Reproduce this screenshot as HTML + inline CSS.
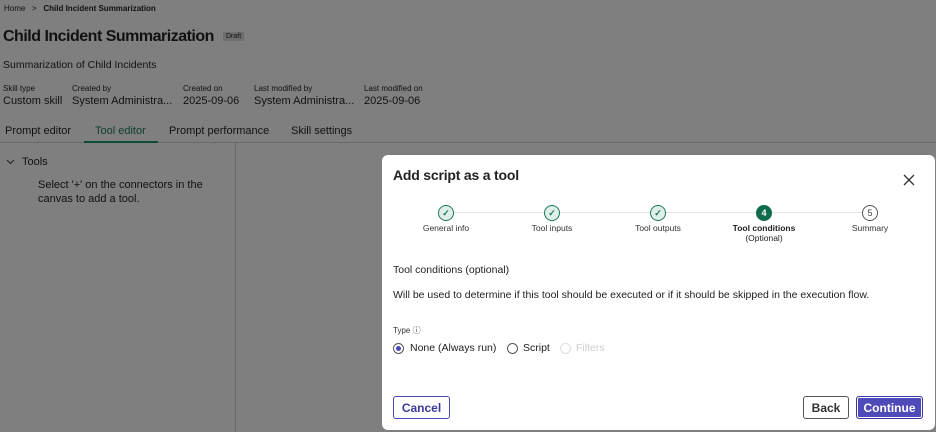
<!DOCTYPE html>
<html><head><meta charset="utf-8"><style>
*{margin:0;padding:0;box-sizing:border-box}
body{width:936px;height:432px;overflow:hidden;background:#7f7f7f;font-family:"Liberation Sans",sans-serif;color:#111;position:relative}
.a{position:absolute;white-space:nowrap}
.m{position:absolute;left:382px;top:155px;width:553px;height:275px;background:#fff;border-radius:6px}
.c{position:absolute;width:16px;height:16px;border-radius:50%;top:50px;border:1.5px solid #1d7a5a;background:#dfeee8;display:flex;align-items:center;justify-content:center;font-size:9px;font-weight:bold}
.lb{position:absolute;top:68px;font-size:8.5px;color:#333;text-align:center;width:100px}
.btn{position:absolute;top:241px;height:23px;border:1px solid #555;border-radius:3px;font-size:12px;font-weight:bold;display:flex;align-items:center;justify-content:center}
</style></head><body>
<div class="a" style="left:4px;top:4px;font-size:8px">Home &nbsp;&nbsp;&gt;&nbsp;&nbsp; <b>Child Incident Summarization</b></div>
<div class="a" style="left:3px;top:28px;font-size:16px;font-weight:bold;letter-spacing:-0.5px">Child Incident Summarization</div>
<div class="a" style="left:223px;top:32px;font-size:7px;background:#6e6e6e;padding:1px 3px">Draft</div>
<div class="a" style="left:3px;top:59px;font-size:10.5px">Summarization of Child Incidents</div>
<div class="a" style="left:3px;top:84px;font-size:8px">Skill type</div>
<div class="a" style="left:72px;top:84px;font-size:8px">Created by</div>
<div class="a" style="left:183px;top:84px;font-size:8px">Created on</div>
<div class="a" style="left:254px;top:84px;font-size:8px">Last modified by</div>
<div class="a" style="left:364px;top:84px;font-size:8px">Last modified on</div>
<div class="a" style="left:3px;top:95px;font-size:11px">Custom skill</div>
<div class="a" style="left:72px;top:95px;font-size:11px">System Administra...</div>
<div class="a" style="left:183px;top:95px;font-size:11px">2025-09-06</div>
<div class="a" style="left:254px;top:95px;font-size:11px">System Administra...</div>
<div class="a" style="left:364px;top:95px;font-size:11px">2025-09-06</div>
<div class="a" style="left:5px;top:125px;font-size:11px">Prompt editor</div>
<div class="a" style="left:95px;top:125px;font-size:11px;color:#0f3d2c">Tool editor</div>
<div class="a" style="left:169px;top:125px;font-size:11px">Prompt performance</div>
<div class="a" style="left:291px;top:125px;font-size:11px">Skill settings</div>
<div class="a" style="left:0;top:142px;width:936px;height:1px;background:#6a6a6a"></div>
<div class="a" style="left:84px;top:141px;width:74px;height:2px;background:#0f4a33"></div>
<div class="a" style="left:235px;top:143px;width:1px;height:289px;background:#6a6a6a"></div>
<svg class="a" style="left:6px;top:159px" width="9" height="6"><path d="M1 1L4.5 4.5L8 1" fill="none" stroke="#222" stroke-width="1"/></svg>
<div class="a" style="left:22px;top:156px;font-size:11px">Tools</div>
<div class="a" style="left:38px;top:178px;font-size:11px;line-height:14px">Select '+' on the connectors in the<br>canvas to add a tool.</div>
<div class="m">
<div class="a" style="left:11px;top:12px;font-size:14px;font-weight:bold;color:#222;letter-spacing:-0.2px">Add script as a tool</div>
<svg class="a" style="left:521px;top:19px" width="12" height="12"><path d="M1 1L11 11M11 1L1 11" stroke="#333" stroke-width="1.3"/></svg>
<div class="a" style="left:64px;top:57px;width:424px;height:1px;background:#e3e3e3"></div>
<div class="c" style="left:56px;color:#1d7a5a">&#10003;</div>
<div class="c" style="left:162px;color:#1d7a5a">&#10003;</div>
<div class="c" style="left:268px;color:#1d7a5a">&#10003;</div>
<div class="c" style="left:374px;background:#0e6b4b;color:#fff;border-color:#0e6b4b">4</div>
<div class="c" style="left:480px;background:#fff;border-color:#555;color:#444;font-weight:normal">5</div>
<div class="lb" style="left:14px">General info</div>
<div class="lb" style="left:120px">Tool inputs</div>
<div class="lb" style="left:226px">Tool outputs</div>
<div class="lb" style="left:332px;font-weight:bold;color:#222">Tool conditions<br><span style="font-weight:normal">(Optional)</span></div>
<div class="lb" style="left:438px">Summary</div>
<div class="a" style="left:11px;top:109px;font-size:10.5px;color:#222">Tool conditions (optional)</div>
<div class="a" style="left:11px;top:134px;font-size:10.5px;color:#222">Will be used to determine if this tool should be executed or if it should be skipped in the execution flow.</div>
<div class="a" style="left:11px;top:170px;font-size:8px;color:#333">Type &#9432;</div>
<div class="a" style="left:11px;top:188px;width:11px;height:11px;border:1px solid #555;border-radius:50%"><div style="margin:2px;width:5px;height:5px;border-radius:50%;background:#4a47b8"></div></div>
<div class="a" style="left:28px;top:187px;font-size:10.5px;color:#222">None (Always run)</div>
<div class="a" style="left:125px;top:188px;width:11px;height:11px;border:1px solid #555;border-radius:50%"></div>
<div class="a" style="left:141px;top:187px;font-size:10.5px;color:#222">Script</div>
<div class="a" style="left:178px;top:188px;width:11px;height:11px;border:1px solid #ddd;border-radius:50%"></div>
<div class="a" style="left:194px;top:187px;font-size:10.5px;color:#ccc">Filters</div>
<div class="btn" style="left:11px;width:57px;border-color:#4a47b8;color:#3b3a9e">Cancel</div>
<div class="btn" style="left:421px;width:46px;color:#333">Back</div>
<div class="btn" style="left:474px;width:67px;background:#4e4bb8;color:#fff;border-color:#3a37a0;box-shadow:inset 0 0 0 1px #fff">Continue</div>
</div>
</body></html>
